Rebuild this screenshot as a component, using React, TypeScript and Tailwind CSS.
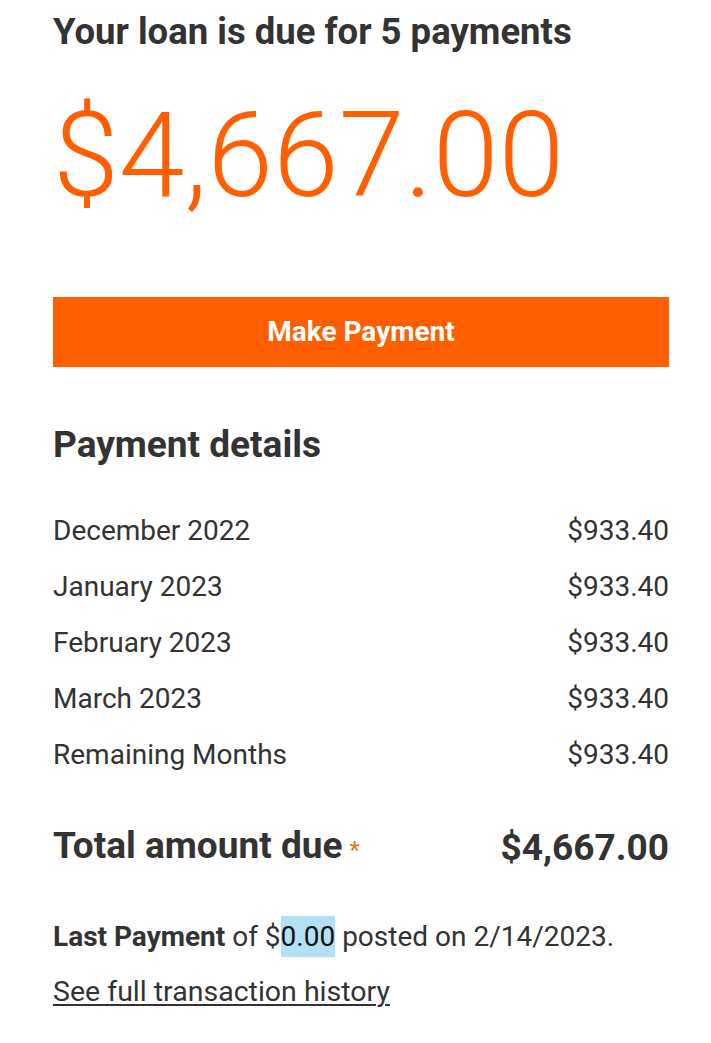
import React from 'react';

const rows = [
	{ label: 'December 2022', amount: '$933.40' },
	{ label: 'January 2023', amount: '$933.40' },
	{ label: 'February 2023', amount: '$933.40' },
	{ label: 'March 2023', amount: '$933.40' },
	{ label: 'Remaining Months', amount: '$933.40' },
];

export default function App() {
	return (
		<div className="min-h-[1043px] bg-white pl-[53px] pr-[42px] pt-[8px] text-[#333333]" style={{ fontFamily: 'Roboto, "Noto Sans", sans-serif' }}>
			<h1 className="text-[36.5px] font-bold leading-[48px]">Your loan is due for 5 payments</h1>
			<div className="mt-[30px] text-[118.5px] font-light leading-[140px] text-[#ff5f00]">$4,667.00</div>

			<button className="mt-[71px] flex h-[70px] w-full items-center justify-center bg-[#ff5f00] text-[28px] font-bold text-white">
				Make Payment
			</button>

			<h2 className="mt-[56px] text-[37px] font-bold leading-[44px]">Payment details</h2>

			{/* Breakdown */}
			<div className="mt-[36px] flex flex-col">
				{rows.map((r) => (
					<div key={r.label} className="flex h-[56px] items-center justify-between text-[28px]">
						<span>{r.label}</span>
						<span>{r.amount}</span>
					</div>
				))}
			</div>

			<div className="mt-[39px] flex items-center justify-between text-[37px] font-bold leading-[48px]">
				<span>
					Total amount due<span className="ml-[7px] text-[24px] font-normal text-[#e8731a]">*</span>
				</span>
				<span>$4,667.00</span>
			</div>

			<p className="mt-[43px] text-[28px] leading-[40px]">
				<span className="font-bold">Last Payment</span> of $<span className="bg-[#b3e0f5] py-[4px] text-[#111111]">0.00</span> posted on 2/14/2023.
			</p>
			<a href="#" className="mt-[15px] block text-[28.5px] leading-[40px] underline decoration-2 underline-offset-[3px]">
				See full transaction history
			</a>
		</div>
	);
}
